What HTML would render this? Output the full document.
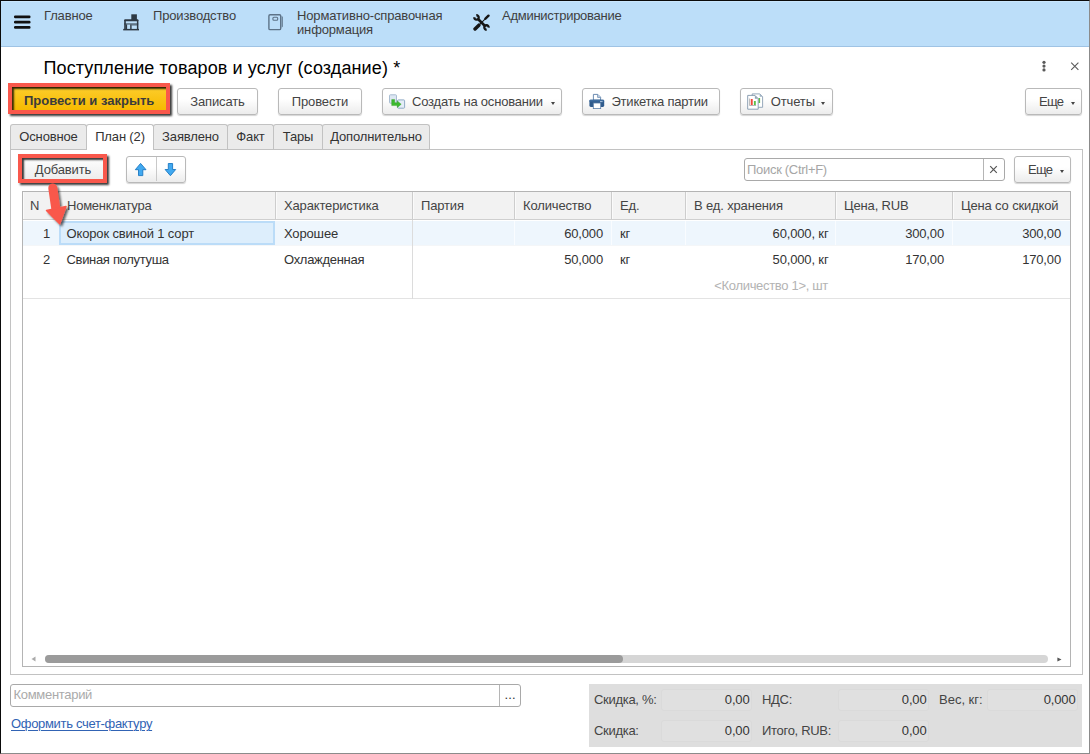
<!DOCTYPE html>
<html lang="ru">
<head>
<meta charset="utf-8">
<title>Поступление товаров и услуг (создание)</title>
<style>
*{box-sizing:border-box;margin:0;padding:0}
html,body{width:1090px;height:754px;overflow:hidden;background:#fff}
body{font-family:"Liberation Sans",Arial,sans-serif;font-size:13px;color:#333;position:relative;letter-spacing:-0.15px}
.abs{position:absolute}
#frame{position:absolute;left:0;top:0;width:1090px;height:754px;border:1px solid #0a0a0a;border-right-color:rgba(0,0,0,.45);border-bottom-color:rgba(0,0,0,.45);pointer-events:none;z-index:50}
#topbar{position:absolute;left:1px;top:1px;width:1088px;height:46px;background:#bcdef9;border-bottom:1px solid #9fc3e4;box-shadow:inset 0 1px 0 #c9e6fd}
.sec{position:absolute;top:8px;line-height:14px;color:#3f3f3f;white-space:nowrap}
#title{position:absolute;left:43.5px;top:57px;font-size:18px;line-height:22px;color:#000;white-space:nowrap;letter-spacing:0.12px}
.btn{position:absolute;height:27px;border:1px solid #b9b9b9;border-radius:3px;background:linear-gradient(#ffffff 0%,#ffffff 40%,#ececec 100%);box-shadow:0 1px 1px rgba(0,0,0,.17);white-space:nowrap;line-height:25px;color:#444;text-align:center}
.tab{position:absolute;top:124px;height:25px;border:1px solid #c2c2c2;border-bottom:none;background:#ebebeb;border-radius:3px 3px 0 0;line-height:23px;text-align:center;color:#333;white-space:nowrap}
.tab.act{background:#fff;top:124px;height:26px;z-index:3}
#panel{position:absolute;left:10px;top:149px;width:1073px;height:526px;border:1px solid #c2c2c2;background:#fff}
#grid{position:absolute;left:22px;top:191px;width:1049px;height:476px;border:1px solid #b4b4b4;background:#fff}
.th{position:absolute;top:192px;height:28px;background:#f2f2f2;border-right:1px solid #cdcdcd;border-bottom:1px solid #cfcfcf;box-shadow:inset 1px 0 0 #fafafa;line-height:27px;padding-left:9px;color:#444;white-space:nowrap}
.td{position:absolute;height:27px;line-height:27px;white-space:nowrap;color:#333}
.r{text-align:right}
.lbl{position:absolute;white-space:nowrap;color:#444;line-height:16px;letter-spacing:-0.3px}
.fld{position:absolute;height:22px;border:1px solid #dadada;border-radius:3px;background:#e0e0e0;text-align:right;line-height:20px;padding-right:1.5px;color:#333}

.redbox{position:absolute;border:4px solid #f9584c;box-shadow:2px 2px 2px rgba(0,0,0,.78), inset 2px 2px 2px rgba(0,0,0,.78);z-index:20;pointer-events:none}
#bmain{position:absolute;left:11px;top:87px;width:156px;height:24px;background:linear-gradient(#fccc2a,#f6ba00);border:1px solid #c79a00;font-weight:bold;color:#3b3b3b;line-height:26px;text-align:left;padding-left:12px;white-space:nowrap;letter-spacing:0}
.dd{display:inline-block;width:0;height:0;border-left:2.5px solid transparent;border-right:2.5px solid transparent;border-top:3px solid #444;vertical-align:middle;margin-left:7.7px;position:relative;top:1px}
</style>
</head>
<body>
<div id="topbar">
<svg class="abs" style="left:11px;top:12px" width="20" height="18" viewBox="12 13 20 18"><g fill="#111"><rect x="14" y="15.4" width="16.5" height="2.8" rx="1.2"/><rect x="14" y="20.7" width="16.5" height="2.8" rx="1.2"/><rect x="14" y="26" width="16.5" height="2.8" rx="1.2"/></g></svg>
<div class="sec" style="left:43px">Главное</div>
<svg class="abs" style="left:121px;top:11px" width="20" height="20" viewBox="122 12 20 20"><g fill="#2e3944"><rect x="123.2" y="28.9" width="15.8" height="1.5"/><rect x="131.3" y="14.3" width="5.6" height="6"/><rect x="124.2" y="19.3" width="14.2" height="2" rx="0.8"/><rect x="124.2" y="20" width="1.6" height="9"/><rect x="136.9" y="20" width="1.5" height="9"/><rect x="124.2" y="23.4" width="14" height="1.1" opacity=".85"/><rect x="125.6" y="24.4" width="1.5" height="4.6"/><rect x="130.2" y="24.4" width="1.4" height="4.6"/><rect x="131.6" y="24.4" width="5.4" height="1.2" opacity=".6"/></g></svg>
<div class="sec" style="left:152px">Производство</div>
<svg class="abs" style="left:265px;top:11px" width="20" height="20" viewBox="266 12 20 20"><rect x="268.9" y="14.8" width="11.8" height="14.8" rx="1.2" fill="none" stroke="#5d7388" stroke-width="1.4"/><rect x="272.9" y="17.3" width="4.8" height="2.9" rx="1" fill="none" stroke="#5d7388" stroke-width="1.1"/><path d="M281.6 15.8L283 17v9.5l-1.4 1.3z" fill="#5d7388" opacity=".8"/></svg>
<div class="sec" style="left:296px">Нормативно-справочная<br>информация</div>
<svg class="abs" style="left:471.8px;top:13px" width="17" height="17" viewBox="0 0 16.2 16.3"><g fill="none" stroke="#161616"><path d="M3.12 1.21A2.1 2.1 0 1 1 1.21 3.12" stroke-width="2.2"/><path d="M13.08 14.99A2.1 2.1 0 1 1 14.99 13.08" stroke-width="2.2"/><path d="M4.5 4.5L11.7 11.7" stroke-width="2.6"/><path d="M1.9 14.4L5.6 10.7" stroke-width="3.3" stroke-linecap="round"/><path d="M5.6 10.7L12 4.4" stroke-width="1"/><path d="M11.9 4.5L14.8 1.6" stroke-width="2.3" stroke-linecap="round"/></g></svg>
<div class="sec" style="left:501px;letter-spacing:-0.27px">Администрирование</div>
</div>
<div id="title">Поступление товаров и услуг (создание) *</div>
<div id="bmain">Провести и закрыть</div>
<div class="redbox" style="left:8px;top:83px;width:162px;height:31px"></div>
<div class="btn" style="left:177px;top:88px;width:81px">Записать</div>
<div class="btn" style="left:278px;top:88px;width:84px">Провести</div>
<div class="btn" style="left:382px;top:88px;width:180px;text-align:left;padding-left:29px"><span style="letter-spacing:-0.2px">Создать на основании</span><span class="dd" style="margin-left:8.5px"></span></div>
<div class="btn" style="left:582px;top:88px;width:138px;text-align:left;padding-left:28.5px;letter-spacing:-0.22px">Этикетка партии</div>
<div class="btn" style="left:740px;top:88px;width:93px;text-align:left;padding-left:29.8px">Отчеты<span class="dd" style="margin-left:6.5px"></span></div>
<svg class="abs" style="left:388px;top:93px" width="18" height="17" viewBox="388 93 18 17"><rect x="389.5" y="94.8" width="7" height="8.4" rx="0.8" fill="#dde7f2" stroke="#a8bdd2" stroke-width="1"/><rect x="397.6" y="99.9" width="7" height="8.3" rx="0.8" fill="#e4edf7" stroke="#8faac5" stroke-width="1"/><path d="M391.7 99.6h3v3.2h2.6v-1.9l3.9 3.3-3.9 3.3v-1.9h-5.6z" fill="#3dba2f" stroke="#2f9d24" stroke-width=".4" stroke-linejoin="round"/></svg>
<svg class="abs" style="left:588px;top:93px" width="18" height="17" viewBox="588 93 18 17"><path d="M593.4 94.4h4.4l2.8 2.8v3h-7.2z" fill="#fff" stroke="#5b7fa8" stroke-width=".9" stroke-linejoin="round"/><path d="M597.6 94.6v2.8h2.8" fill="#c9d8ea" stroke="#5b7fa8" stroke-width=".7"/><rect x="589.4" y="99.8" width="14.8" height="7.2" rx="1.4" fill="#2f5b8c"/><rect x="589.4" y="99.8" width="14.8" height="1.8" rx="0.9" fill="#3d6c9f"/><rect x="600" y="101.3" width="2.6" height="0.8" fill="#cfe0f2"/><rect x="593.3" y="103" width="7.4" height="5.6" fill="#fff" stroke="#5b7fa8" stroke-width=".8"/></svg>
<svg class="abs" style="left:746px;top:92px" width="19" height="19" viewBox="746 92 19 19"><path d="M752.2 93.9h7.6l2.8 2.8v10.6h-10.4z" fill="#fff" stroke="#8a9fb3" stroke-width=".9" stroke-linejoin="round"/><path d="M759.7 94v2.8h2.8z" fill="#9fb1c3"/><rect x="758.4" y="98" width="1.7" height="5" fill="#5cc04a"/><path d="M747.7 95.4h7.3l3.2 3.2v10.6h-10.5z" fill="#fff" stroke="#8096ab" stroke-width=".9" stroke-linejoin="round"/><path d="M754.9 95.5v3.2h3.2z" fill="#8fa3b7"/><path d="M749.6 98.5v7h6.5" fill="none" stroke="#9a9a9a" stroke-width=".7"/><rect x="750.8" y="99" width="1.9" height="6" fill="#f0483a"/><rect x="753.9" y="101" width="1.9" height="4" fill="#5cc04a"/></svg>
<div class="btn" style="left:1025px;top:88px;width:57px;text-align:left;padding-left:13px"><span style="letter-spacing:-0.75px">Еще</span><span class="dd"></span></div>
<svg class="abs" style="left:1041px;top:60px" width="6" height="12" viewBox="1041 60 6 12"><g fill="#5a5a5a"><circle cx="1044" cy="62.3" r="1.6"/><circle cx="1044" cy="66.1" r="1.6"/><circle cx="1044" cy="69.9" r="1.6"/></g></svg>
<svg class="abs" style="left:1070px;top:61px" width="10" height="10" viewBox="1070 61 10 10"><path d="M1071.2 62.6l7.2 7.2M1078.4 62.6l-7.2 7.2" stroke="#5a5a5a" stroke-width="1.1"/></svg>
<div id="panel"></div>
<div class="tab" style="left:10px;width:77px">Основное</div>
<div class="tab act" style="left:86px;width:68px">План (2)</div>
<div class="tab" style="left:153px;width:75px">Заявлено</div>
<div class="tab" style="left:227px;width:47px">Факт</div>
<div class="tab" style="left:273px;width:50px">Тары</div>
<div class="tab" style="left:322px;width:108px">Дополнительно</div>

<div class="abs" id="badd" style="left:22px;top:157px;width:82px;height:23px;background:linear-gradient(#ffffff,#ececec);line-height:25px;text-align:center;color:#444">Добавить</div>
<div class="redbox" style="left:18px;top:154px;width:89px;height:29px"></div>
<div class="btn" style="left:126px;top:156px;width:60px"></div>
<div class="abs" style="left:156px;top:157px;width:1px;height:24px;background:#c9c9c9"></div>
<svg class="abs" style="left:133px;top:161px" width="46" height="17" viewBox="133 161 46 17"><g fill="#41a9f0" stroke="#1c78c2" stroke-width="0.9" stroke-linejoin="round"><path d="M140.6 163.4L146 169.7H142.8V175.6H138.5V169.7H135.3Z"/><path d="M170.4 175.7L175.7 169.5H172.6V163.5H168.3V169.5H165.1Z"/></g></svg>
<div class="abs" style="left:744px;top:158px;width:261px;height:23px;border:1px solid #a9a9a9;border-radius:3px;background:#fff"></div>
<div class="abs" style="left:983px;top:159px;width:1px;height:21px;background:#b5b5b5"></div>
<div class="abs" style="left:747px;top:158px;line-height:23px;color:#a6a6a6;letter-spacing:-0.3px">Поиск (Ctrl+F)</div>
<svg class="abs" style="left:989px;top:165px" width="9" height="9" viewBox="0 0 9 9"><path d="M1.2 1.2l6.6 6.6M7.8 1.2L1.2 7.8" stroke="#555" stroke-width="1.2"/></svg>
<div class="btn" style="left:1014px;top:156px;width:57px;text-align:left;padding-left:13px;line-height:26px"><span style="letter-spacing:-0.75px">Еще</span><span class="dd"></span></div>
<div id="grid"></div>
<div class="th" style="left:23px;width:36px;padding-left:7px">N</div>
<div class="th" style="left:59px;width:217px;padding-left:8px;letter-spacing:-0.23px">Номенклатура</div>
<div class="th" style="left:276px;width:137px;padding-left:8px">Характеристика</div>
<div class="th" style="left:413px;width:102px;padding-left:8px">Партия</div>
<div class="th" style="left:515px;width:97px;padding-left:8px">Количество</div>
<div class="th" style="left:612px;width:74px;padding-left:8px">Ед.</div>
<div class="th" style="left:686px;width:150px;padding-left:8px">В ед. хранения</div>
<div class="th" style="left:836px;width:117px;padding-left:8px">Цена, RUB</div>
<div class="th" style="left:953px;width:117px;padding-left:8px;border-right:none">Цена со скидкой</div>
<div class="abs" style="left:23px;top:221px;width:1047px;height:24px;background:#eef6fd"></div>
<div class="abs" style="left:23px;top:245px;width:1047px;height:1px;background:#f4f6f8"></div>
<div class="abs" style="left:59px;top:221px;width:216px;height:24px;background:#ddeefc;border:2px solid #bbdcf8"></div>
<div class="abs" style="left:514px;top:221px;width:1px;height:24px;background:#f9fcff"></div>
<div class="abs" style="left:611px;top:221px;width:1px;height:24px;background:#f9fcff"></div>
<div class="abs" style="left:685px;top:221px;width:1px;height:24px;background:#f9fcff"></div>
<div class="abs" style="left:835px;top:221px;width:1px;height:24px;background:#f9fcff"></div>
<div class="abs" style="left:952px;top:221px;width:1px;height:24px;background:#f9fcff"></div>

<div class="td r" style="left:23px;top:220px;width:36px;padding-right:9px">1</div>
<div class="td" style="left:59px;top:220px;width:216px;padding-left:7.5px">Окорок свиной 1 сорт</div>
<div class="td" style="left:275px;top:220px;width:137px;padding-left:9px">Хорошее</div>
<div class="td r" style="left:515px;top:220px;width:96px;padding-right:8px">60,000</div>
<div class="td" style="left:611px;top:220px;width:74px;padding-left:9px">кг</div>
<div class="td r" style="left:685px;top:220px;width:150px;padding-right:6.5px">60,000, кг</div>
<div class="td r" style="left:835px;top:220px;width:117px;padding-right:8px">300,00</div>
<div class="td r" style="left:952px;top:220px;width:117px;padding-right:8px">300,00</div>
<div class="td r" style="left:23px;top:246px;width:36px;padding-right:9px">2</div>
<div class="td" style="left:59px;top:246px;width:216px;padding-left:7.5px;letter-spacing:-0.32px">Свиная полутуша</div>
<div class="td" style="left:275px;top:246px;width:137px;padding-left:9px;letter-spacing:-0.3px">Охлажденная</div>
<div class="td r" style="left:515px;top:246px;width:96px;padding-right:8px">50,000</div>
<div class="td" style="left:611px;top:246px;width:74px;padding-left:9px">кг</div>
<div class="td r" style="left:685px;top:246px;width:150px;padding-right:6.5px">50,000, кг</div>
<div class="td r" style="left:835px;top:246px;width:117px;padding-right:8px">170,00</div>
<div class="td r" style="left:952px;top:246px;width:117px;padding-right:8px">170,00</div>
<div class="td r" style="left:685px;top:272px;width:150px;padding-right:7px;letter-spacing:-0.32px;color:#b3b3b3">&lt;Количество 1&gt;, шт</div>
<div class="abs" style="left:23px;top:298px;width:1047px;height:1px;background:#e3e3e3"></div>
<div class="abs" style="left:412px;top:220px;width:1px;height:79px;background:#dcdcdc"></div>
<div class="abs" style="left:45px;top:655px;width:1003px;height:8px;border-radius:4px;background:#d6d6d6"></div>
<div class="abs" style="left:45px;top:655px;width:578px;height:8px;border-radius:4px;background:#9b9b9b"></div>
<svg class="abs" style="left:31px;top:656px" width="5" height="6" viewBox="0 0 5 6"><path d="M4.5 0.5v5L0.5 3z" fill="#aaa"/></svg>
<svg class="abs" style="left:1057px;top:657px" width="5" height="5" viewBox="0 0 5 5"><path d="M0.4 0.4v4.2L4.5 2.5z" fill="#555"/></svg>
<svg class="abs" style="left:36px;top:176px;z-index:25;overflow:visible" width="44" height="58" viewBox="36 176 44 58"><defs><filter id="sh" x="-30%" y="-20%" width="180%" height="150%"><feDropShadow dx="2" dy="2" stdDeviation="1.3" flood-color="#000" flood-opacity=".6"/></filter></defs><g filter="url(#sh)" fill="#f9584c" stroke="#f9584c" stroke-linejoin="round"><path d="M52.8 188L56.3 212" stroke-width="9" stroke-linecap="round" fill="none"/><path d="M46.5 210.5L66 206.5L59.7 223.8Z" stroke-width="1.5"/></g></svg>
<div class="abs" style="left:10px;top:684px;width:511px;height:23px;border:1px solid #a9a9a9;border-radius:3px;background:#fff"></div>
<div class="abs" style="left:499px;top:685px;width:1px;height:21px;background:#b5b5b5"></div>
<div class="abs" style="left:13.5px;top:684px;line-height:22px;color:#aaa;letter-spacing:-0.3px">Комментарий</div>
<div class="abs" style="left:504.5px;top:687px;line-height:16px;color:#333;letter-spacing:0.2px">...</div>
<div class="abs" style="left:11px;top:716px;line-height:16px;color:#3163b4;text-decoration:underline;text-decoration-thickness:1px;text-underline-offset:2px;letter-spacing:-0.32px">Оформить счет-фактуру</div>
<div class="abs" style="left:589px;top:684px;width:493px;height:63px;background:#dedede"></div>
<div class="lbl" style="left:594px;top:692px">Скидка, %:</div>
<div class="fld" style="left:661px;top:689px;width:91px">0,00</div>
<div class="lbl" style="left:762px;top:692px">НДС:</div>
<div class="fld" style="left:838px;top:689px;width:91px">0,00</div>
<div class="lbl" style="left:939px;top:692px;letter-spacing:0">Вес, кг:</div>
<div class="fld" style="left:987px;top:689px;width:91px">0,000</div>
<div class="lbl" style="left:594px;top:723px">Скидка:</div>
<div class="fld" style="left:661px;top:720px;width:91px">0,00</div>
<div class="lbl" style="left:762px;top:723px">Итого, RUB:</div>
<div class="fld" style="left:838px;top:720px;width:91px">0,00</div>

<div id="frame"></div>
</body>
</html>
